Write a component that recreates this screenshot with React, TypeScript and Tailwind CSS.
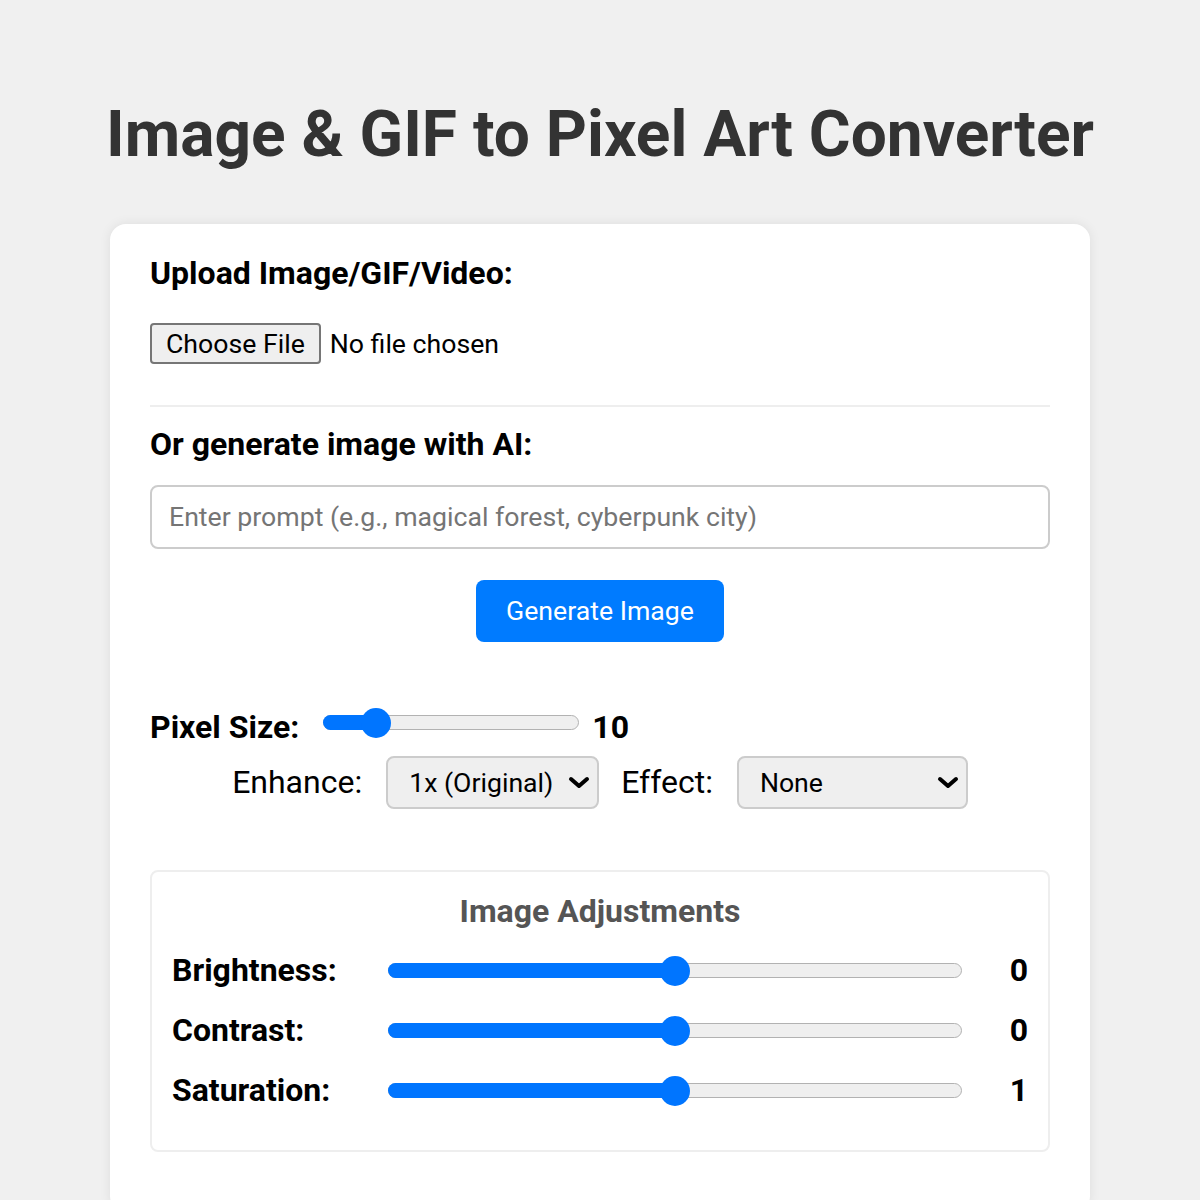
import React from 'react';

const Slider: React.FC<{ pct: number; className?: string }> = ({ pct, className }) => (
  <div className={`relative h-[30px] ${className ?? ''}`}>
    <div className="absolute left-0 right-0 top-[7px] h-[15px] rounded-full border-[1.5px] border-[#b2b2b2] bg-[#efefef]" />
    <div
      className="absolute left-0 top-[7px] h-[15px] rounded-full bg-[#0075ff]"
      style={{ width: `calc(15px + (100% - 30px) * ${pct})` }}
    />
    <div
      className="absolute top-0 h-[30px] w-[30px] rounded-full bg-[#0075ff]"
      style={{ left: `calc((100% - 30px) * ${pct})` }}
    />
  </div>
);

const Chevron = () => (
  <svg width="22" height="13" viewBox="0 0 22 13" className="shrink-0">
    <polyline points="3,3 11,10 19,3" fill="none" stroke="#000" strokeWidth="4" strokeLinecap="round" strokeLinejoin="round" />
  </svg>
);

const Select: React.FC<{ value: string; width: string }> = ({ value, width }) => (
  <div className={`flex h-[53px] items-center justify-between rounded-lg border-2 border-[#cccccc] bg-[#efefef] pl-[21px] pr-[7px] ${width}`}>
    <span className="text-[26.67px] text-black">{value}</span>
    <Chevron />
  </div>
);

const adjustments = [
  { label: 'Brightness:', value: '0' },
  { label: 'Contrast:', value: '0' },
  { label: 'Saturation:', value: '1' },
];

export default function App() {
  return (
    <div className="min-h-screen bg-[#f0f0f0] font-['Roboto',sans-serif]">
      <h1 className="pt-[100px] text-center text-[64px] font-bold leading-[70px] text-[#333333]">
        Image &amp; GIF to Pixel Art Converter
      </h1>

      <div className="mx-auto mt-[54px] w-[980px] rounded-2xl bg-white px-10 pb-[60px] pt-[32px] shadow-[0_0_12px_rgba(0,0,0,0.08)]">
        <h2 className="text-[32px] font-bold leading-[35px] text-black">Upload Image/GIF/Video:</h2>

        <div className="mt-[32px] flex items-center">
          <div className="flex h-[41px] items-center rounded-[4px] border-2 border-[#767676] bg-[#efefef] px-[14px] text-[26.67px] text-black">
            Choose File
          </div>
          <span className="ml-[9px] text-[26.67px] text-black">No file chosen</span>
        </div>

        <div className="mt-[41px] h-[2px] bg-[#eeeeee]" />

        <h2 className="mt-[20px] text-[32px] font-bold leading-[35px] text-black">Or generate image with AI:</h2>

        <div className="mt-[23px] flex h-[64px] items-center rounded-lg border-2 border-[#cccccc] pl-[17px] text-[26.67px] text-[#757575]">
          Enter prompt (e.g., magical forest, cyberpunk city)
        </div>

        <div className="mt-[31px] flex justify-center">
          <div className="flex h-[62px] w-[248px] items-center justify-center rounded-lg bg-[#007bff] text-[26.67px] text-white">
            Generate Image
          </div>
        </div>

        <div className="mt-[68px] flex items-center">
          <span className="text-[32px] font-bold leading-[35px] text-black">Pixel Size:</span>
          <Slider pct={0.169} className="ml-[24px] -mt-[9px] w-[256px]" />
          <span className="ml-[13px] text-[32px] font-bold leading-[35px] text-black">10</span>
        </div>

        <div className="mt-[11px] flex items-center justify-center">
          <span className="text-[32px] leading-[35px] text-black">Enhance:</span>
          <div className="ml-[24px]">
            <Select value="1x (Original)" width="w-[213px]" />
          </div>
          <span className="ml-[22px] text-[32px] leading-[35px] text-black">Effect:</span>
          <div className="ml-[24px]">
            <Select value="None" width="w-[231px]" />
          </div>
        </div>

        <div className="mt-[61px] rounded-lg border-2 border-[#eeeeee] px-[20px] pb-[42px] pt-[22px]">
          <h3 className="text-center text-[32px] font-bold leading-[35px] text-[#555555]">Image Adjustments</h3>
          <div className="mt-[24px] flex flex-col gap-[25px]">
            {adjustments.map(a => (
              <div key={a.label} className="flex items-center">
                <span className="w-[216px] text-[32px] font-bold leading-[35px] text-black">{a.label}</span>
                <Slider pct={0.5} className="w-[574px]" />
                <span className="flex-1 text-right text-[32px] font-bold leading-[35px] text-black">{a.value}</span>
              </div>
            ))}
          </div>
        </div>
      </div>
    </div>
  );
}
